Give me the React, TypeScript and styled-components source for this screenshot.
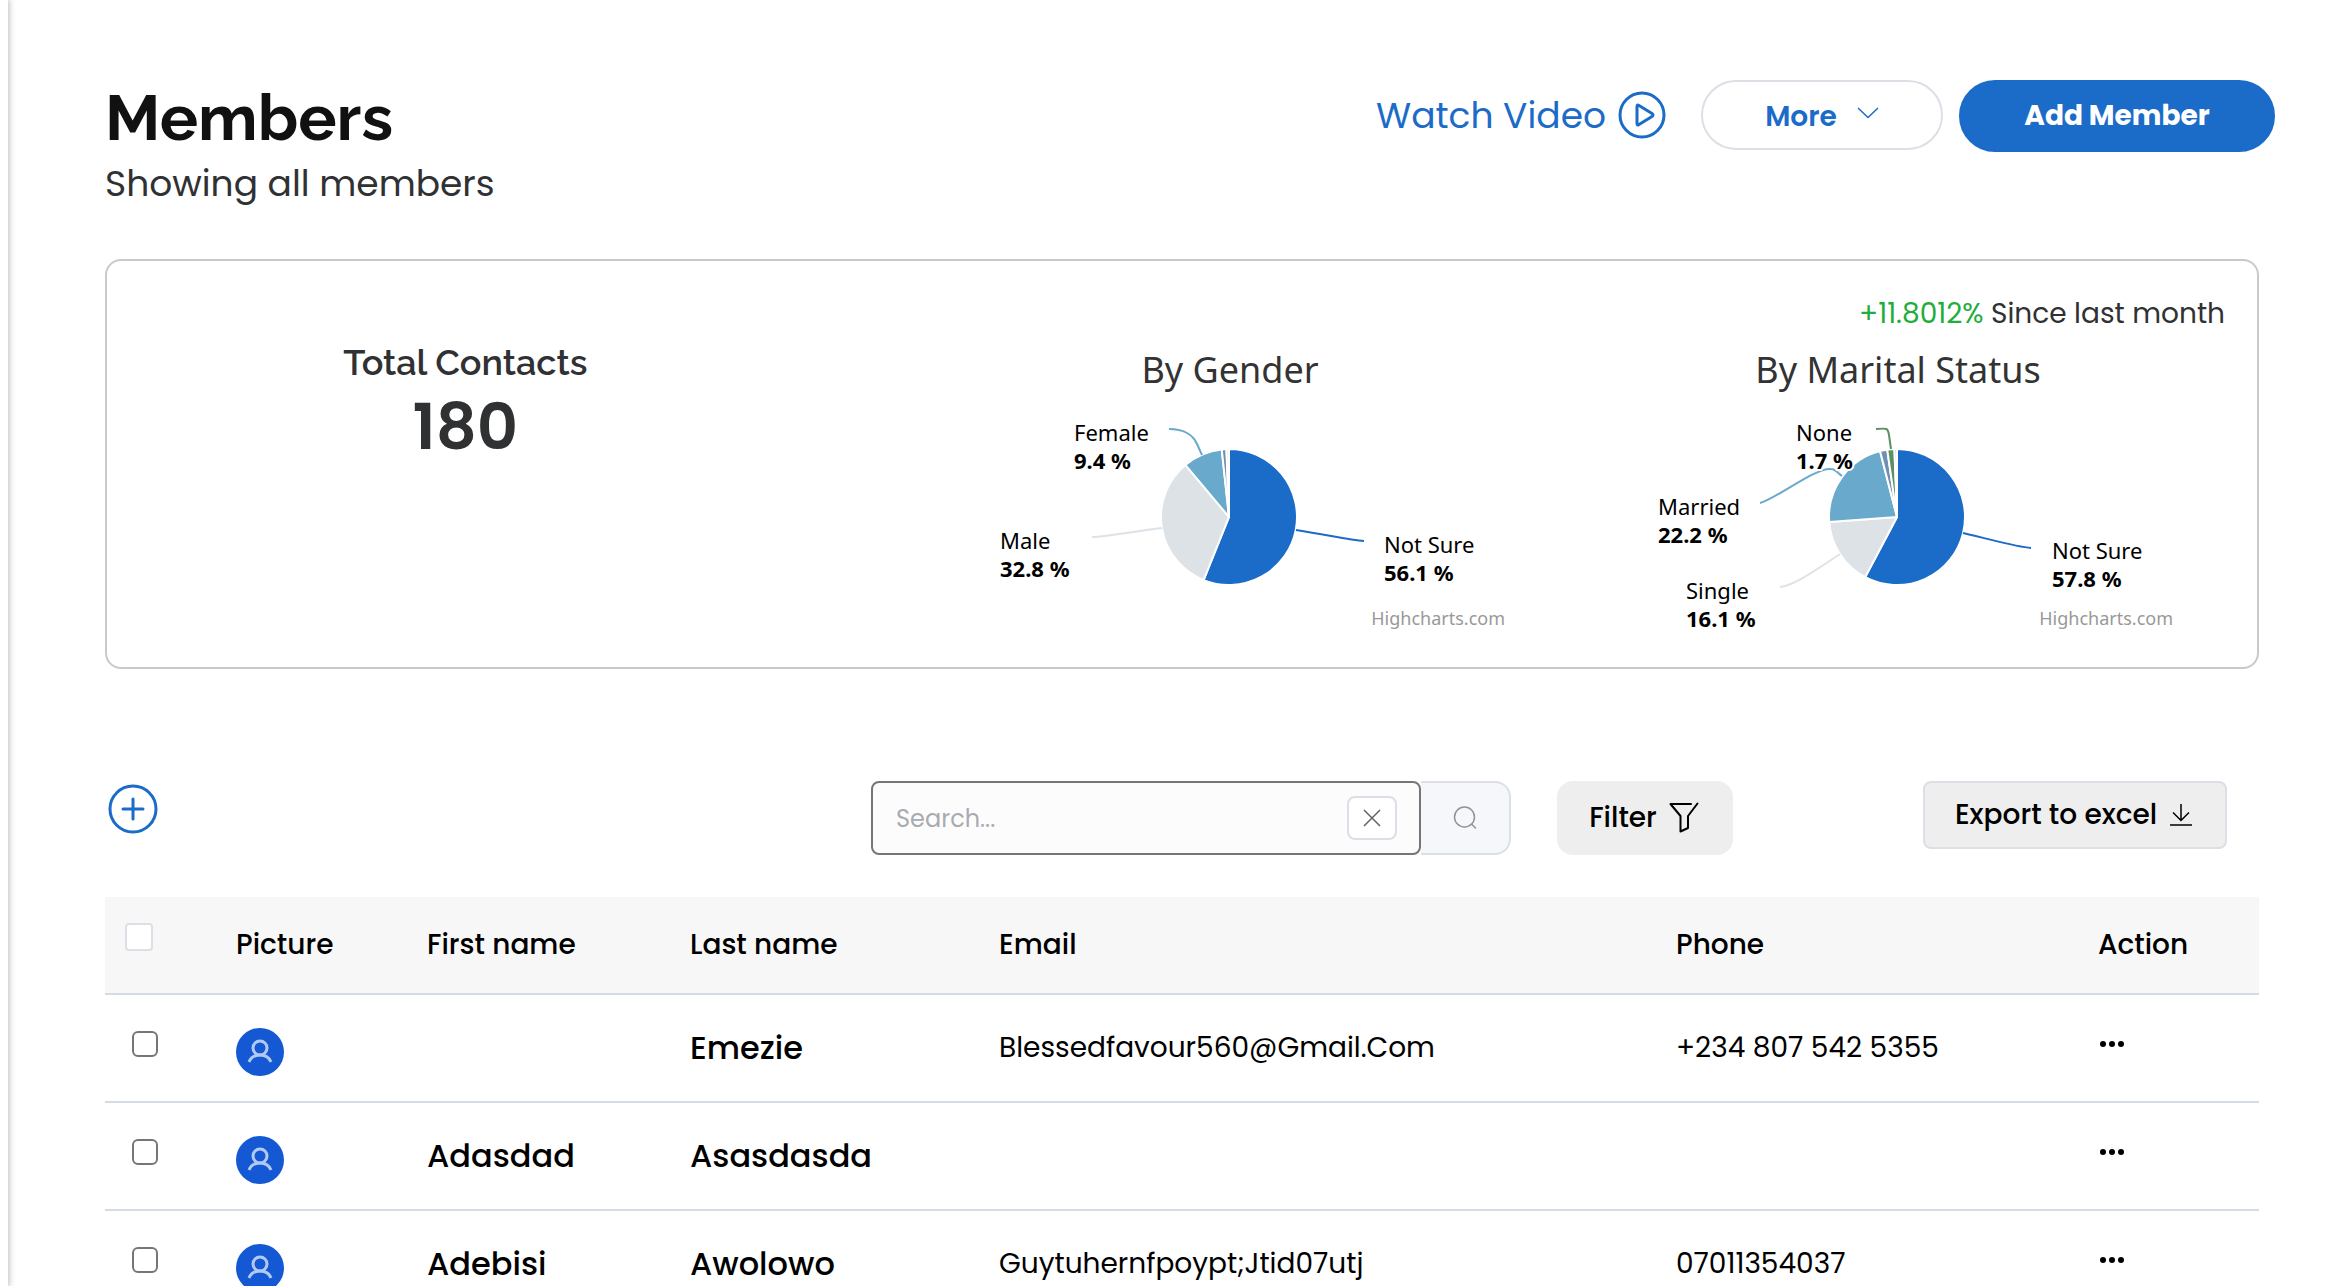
import React from 'react';
import styled, { createGlobalStyle } from 'styled-components';

const ui = '"Poppins", "Inter", "Open Sans", sans-serif';
const heading = '"Raleway", "Inter", sans-serif';
const chartFont = '"Lucida Grande", "Noto Sans", sans-serif';
const blue = '#1b6bc9';

const GlobalStyle = createGlobalStyle`
  *, *::before, *::after { box-sizing: border-box; }
  body { margin: 0; background: #fff; color: #000; font-family: ${ui}; }
  button, input { font-family: inherit; margin: 0; }
  h1, h2, p { margin: 0; }
`;

const Shell = styled.div`
  display: flex;
  height: 100vh;
  overflow: hidden;
`;

const SidebarEdge = styled.div`
  flex: none;
  width: 8px;
  background: #fff;
  box-shadow: 0 0 6px 1px rgba(0, 0, 0, 0.28);
`;

const Main = styled.main`
  flex: 1;
  min-width: 0;
  padding: 80px 67px 0 97px;
`;

const Header = styled.header`
  display: flex;
  justify-content: space-between;
  align-items: flex-start;
  margin-right: -16px;
  height: 179px;
`;

const Title = styled.h1`
  font: 700 64px/76px ${heading};
  color: #111;
`;

const Subtitle = styled.p`
  font-size: 36px;
  line-height: 56px;
  color: #303133;
`;

const HeaderActions = styled.div`
  display: flex;
  align-items: flex-start;
`;

const WatchLink = styled.a`
  display: flex;
  align-items: center;
  gap: 12px;
  height: 70px;
  margin-right: 35px;
  color: ${blue};
  font-size: 36px;
  text-decoration: none;
`;

const PillButton = styled.button<{ $primary?: boolean }>`
  display: flex;
  align-items: center;
  justify-content: center;
  gap: 20px;
  width: ${(p) => (p.$primary ? 316 : 242)}px;
  height: ${(p) => (p.$primary ? 72 : 70)}px;
  margin-left: ${(p) => (p.$primary ? 16 : 0)}px;
  padding: ${(p) => (p.$primary ? 0 : 4)}px 0 0;
  border: 2px solid ${(p) => (p.$primary ? blue : '#dcdfe6')};
  border-radius: 40px;
  background: ${(p) => (p.$primary ? blue : '#fff')};
  color: ${(p) => (p.$primary ? '#fff' : blue)};
  font-size: 28px;
  font-weight: ${(p) => (p.$primary ? 700 : 600)};

  svg { margin-bottom: 8px; }
`;

const StatsCard = styled.section`
  display: grid;
  grid-template-columns: 1fr 2fr;
  height: 410px;
  border: 2px solid #c8c9c9;
  border-radius: 16px;
`;

const Total = styled.div`
  padding-top: 78px;
  text-align: center;
  color: #303133;
`;

const TotalLabel = styled.h2`
  font: 600 36px/46px ${heading};
`;

const TotalValue = styled.p`
  font-size: 64px;
  font-weight: 600;
  line-height: 84px;
`;

const Breakdown = styled.div`
  padding: 31px 26px 0 71px;
`;

const Trend = styled.p`
  margin-bottom: 4px;
  padding-right: 6px;
  text-align: right;
  font-size: 28px;
  line-height: 44px;
  color: #303133;

  span { color: #1fae3c; }
`;

const Charts = styled.div`
  display: flex;
  justify-content: space-around;
`;

const ChartSvg = styled.svg`
  display: block;
  font-family: ${chartFont};
`;

const Toolbar = styled.div`
  display: flex;
  align-items: flex-start;
  height: 116px;
  margin-top: 112px;
  padding-right: 32px;
`;

const AddButton = styled.button`
  display: flex;
  margin: 2px auto 0 2px;
  padding: 0;
  border: 0;
  background: none;
  color: ${blue};
`;

const SearchGroup = styled.div`
  display: flex;
  width: 640px;
  height: 74px;
`;

const SearchBox = styled.label`
  display: flex;
  flex: 1;
  align-items: center;
  min-width: 0;
  padding: 0 22px 0 23px;
  border: 2px solid #767676;
  border-radius: 8px;
  background: #fcfcfc;
`;

const SearchInput = styled.input`
  flex: 1;
  min-width: 0;
  padding: 0;
  border: 0;
  outline: 0;
  background: transparent;
  font-size: 24px;

  &::placeholder { color: #a8abb2; opacity: 1; }
`;

const ClearButton = styled.button`
  display: flex;
  flex: none;
  align-items: center;
  justify-content: center;
  width: 50px;
  height: 44px;
  padding: 0;
  border: 2px solid #dcdfe6;
  border-radius: 8px;
  background: #fff;
  color: #606266;
`;

const SearchButton = styled.button`
  display: flex;
  flex: none;
  align-items: center;
  justify-content: center;
  width: 90px;
  padding: 0;
  border: 2px solid #dcdfe6;
  border-left: 0;
  border-radius: 0 16px 16px 0;
  background: #f5f7fa;
  color: #909399;
`;

const ToolButton = styled.button<{ $outlined?: boolean }>`
  display: flex;
  align-items: center;
  justify-content: center;
  gap: 12px;
  width: ${(p) => (p.$outlined ? 304 : 176)}px;
  height: ${(p) => (p.$outlined ? 68 : 74)}px;
  margin-left: ${(p) => (p.$outlined ? 190 : 46)}px;
  padding: 0 2px 0 0;
  border: ${(p) => (p.$outlined ? '2px solid #dcdfe6' : '0')};
  border-radius: ${(p) => (p.$outlined ? 8 : 16)}px;
  background: #eee;
  color: #000;
  font-size: 28px;
  font-weight: 500;
`;

const Table = styled.table`
  width: 100%;
  table-layout: fixed;
  border-collapse: separate;
  border-spacing: 0;
`;

const Column = styled.col<{ $width?: number }>`
  width: ${(p) => (p.$width ? `${p.$width}px` : 'auto')};
`;

const HeadCell = styled.th`
  height: 98px;
  padding: 0;
  border-bottom: 2px solid #d3dce4;
  background: #f7f7f7;
  text-align: left;
  font-size: 28px;
  font-weight: 500;
`;

const Cell = styled.td<{ $strong?: boolean }>`
  height: 108px;
  padding: 0;
  border-bottom: 2px solid #d3dce4;
  font-size: ${(p) => (p.$strong ? 32 : 28)}px;
  font-weight: ${(p) => (p.$strong ? 500 : 400)};
`;

const Checkbox = styled.input<{ $head?: boolean }>`
  display: block;
  appearance: none;
  width: ${(p) => (p.$head ? 28 : 26)}px;
  height: ${(p) => (p.$head ? 28 : 26)}px;
  margin: ${(p) => (p.$head ? '0 0 16px 20px' : '0 0 8px 27px')};
  border: 2px solid ${(p) => (p.$head ? '#dcdfe6' : '#767676')};
  border-radius: ${(p) => (p.$head ? 4 : 6)}px;
  background: #fff;
`;

const AvatarSvg = styled.svg`
  display: block;
  margin-top: 8px;
`;

const MenuButton = styled.button`
  display: block;
  margin: 0 0 8px;
  padding: 0;
  border: 0;
  background: none;
`;

type Slice = { value: number; color: string };
type Label = { name: string; value: string; x: number; y: number; color: string; path: string };

const CX = 296;
const CY = 177;
const R = 68;

function slicePath(from: number, to: number) {
  const point = (share: number) => {
    const a = share * 2 * Math.PI;
    return `${CX + R * Math.sin(a)} ${CY - R * Math.cos(a)}`;
  };
  return `M${CX} ${CY}L${point(from)}A${R} ${R} 0 ${to - from > 0.5 ? 1 : 0} 1 ${point(to)}Z`;
}

function PieChart({ title, slices, labels }: { title: string; slices: Slice[]; labels: Label[] }) {
  const total = slices.reduce((sum, s) => sum + s.value, 0);
  let start = 0;
  return (
    <ChartSvg width="592" height="300" viewBox="0 0 592 300" role="img" aria-label={title}>
      <text x="297" y="43" textAnchor="middle" fontSize="36" fill="#333">{title}</text>
      {slices.map((s, i) => {
        const from = start / total;
        start += s.value;
        return (
          <path key={i} d={slicePath(from, start / total)} fill={s.color} stroke="#fff" strokeWidth="2" strokeLinejoin="round" />
        );
      })}
      {labels.map((l) => (
        <path key={l.name} d={l.path} fill="none" stroke={l.color} strokeWidth="2" />
      ))}
      {labels.map((l) => (
        <text key={l.name} fontSize="22" fill="#000" stroke="#fff" strokeWidth="4" strokeLinejoin="round" paintOrder="stroke">
          <tspan x={l.x} y={l.y}>{l.name}</tspan>
          <tspan x={l.x} y={l.y + 28} fontWeight="700">{l.value}</tspan>
        </text>
      ))}
      <text x="572" y="285" textAnchor="end" fontSize="18" fill="#999">Highcharts.com</text>
    </ChartSvg>
  );
}

const NOT_SURE = '#1b6bc9';
const GREY = '#dde2e6';
const SKY = '#69a9cc';
const SLATE = '#6f8fb5';
const GREEN = '#5b9060';

const genderSlices: Slice[] = [
  { value: 56.1, color: NOT_SURE },
  { value: 32.8, color: GREY },
  { value: 9.4, color: SKY },
  { value: 1.1, color: SLATE },
  { value: 0.6, color: '#d5e3d6' },
];

const genderLabels: Label[] = [
  { name: 'Female', value: '9.4 %', x: 141, y: 101, color: SKY, path: 'M236 89C253 89 261 97 264 104L269 115' },
  { name: 'Male', value: '32.8 %', x: 67, y: 209, color: GREY, path: 'M159 197C173 197 190 193 229 188' },
  { name: 'Not Sure', value: '56.1 %', x: 451, y: 213, color: NOT_SURE, path: 'M431 201C417 200 400 196 363 190' },
];

const maritalSlices: Slice[] = [
  { value: 57.8, color: NOT_SURE },
  { value: 16.1, color: GREY },
  { value: 22.2, color: SKY },
  { value: 1.7, color: SLATE },
  { value: 1.7, color: GREEN },
  { value: 0.6, color: '#c5cbe0' },
];

const maritalLabels: Label[] = [
  { name: 'Married', value: '22.2 %', x: 57, y: 175, color: SKY, path: 'M159 163C175 159 215 127 230 129C234 129 236 132 241 136' },
  { name: 'Single', value: '16.1 %', x: 85, y: 259, color: GREY, path: 'M179 247C192 246 212 232 239 214' },
  { name: 'None', value: '1.7 %', x: 195, y: 101, color: GREEN, path: 'M275 89C286 88 287 88 288 95L290 109' },
  { name: 'Not Sure', value: '57.8 %', x: 451, y: 219, color: NOT_SURE, path: 'M430 208C416 207 400 202 362 193' },
];

function PlayCircle() {
  return (
    <svg width="48" height="48" viewBox="0 0 48 48" fill="none" stroke="currentColor" strokeWidth="3" strokeLinejoin="round" aria-hidden="true">
      <circle cx="24" cy="24" r="22" />
      <path d="M19 15.5Q19 13 21 14.5L34 22.500Q36 24 34 25.500L21 33.500Q19 35 19 32.500Z" />
    </svg>
  );
}

function PlusCircle() {
  return (
    <svg width="52" height="52" viewBox="0 0 52 52" fill="none" stroke="currentColor" strokeWidth="3" strokeLinecap="round" aria-hidden="true">
      <circle cx="26" cy="26" r="23" />
      <path d="M26 16v20M16 26h20" />
    </svg>
  );
}

function Avatar() {
  return (
    <AvatarSvg width="48" height="48" viewBox="0 0 48 48" fill="none" role="img" aria-label="Profile picture">
      <circle cx="24" cy="24" r="24" fill="#1459d3" />
      <g stroke="#b3c9f2" strokeWidth="3">
        <circle cx="24" cy="20" r="7" />
        <path d="M13 34C15 29 19 27 24 27S33 29 35 34" />
      </g>
    </AvatarSvg>
  );
}

type Member = { first: string; last: string; email: string; phone: string };

const members: Member[] = [
  { first: '', last: 'Emezie', email: 'Blessedfavour560@Gmail.Com', phone: '+234 807 542 5355' },
  { first: 'Adasdad', last: 'Asasdasda', email: '', phone: '' },
  { first: 'Adebisi', last: 'Awolowo', email: 'Guytuhernfpoypt;Jtid07utj', phone: '07011354037' },
];

const columnWidths = [131, 191, 263, 309, undefined, 422, 161];

export default function App() {
  return (
    <Shell>
      <GlobalStyle />
      <SidebarEdge />
      <Main>
        <Header>
          <div>
            <Title>Members</Title>
            <Subtitle>Showing all members</Subtitle>
          </div>
          <HeaderActions>
            <WatchLink href="#video">
              Watch Video
              <PlayCircle />
            </WatchLink>
            <PillButton type="button">
              More
              <svg width="22" height="12" viewBox="0 0 22 12" fill="none" stroke="currentColor" strokeWidth="1.500" aria-hidden="true">
                <path d="M1 1l10 9.500L21 1" />
              </svg>
            </PillButton>
            <PillButton type="button" $primary>Add Member</PillButton>
          </HeaderActions>
        </Header>

        <StatsCard>
          <Total>
            <TotalLabel>Total Contacts</TotalLabel>
            <TotalValue>180</TotalValue>
          </Total>
          <Breakdown>
            <Trend><span>+11.8012%</span> Since last month</Trend>
            <Charts>
              <PieChart title="By Gender" slices={genderSlices} labels={genderLabels} />
              <PieChart title="By Marital Status" slices={maritalSlices} labels={maritalLabels} />
            </Charts>
          </Breakdown>
        </StatsCard>

        <Toolbar>
          <AddButton type="button" aria-label="Add"><PlusCircle /></AddButton>
          <SearchGroup>
            <SearchBox>
              <SearchInput type="text" placeholder="Search..." aria-label="Search members" />
              <ClearButton type="button" aria-label="Clear search">
                <svg width="18" height="18" viewBox="0 0 18 18" fill="none" stroke="currentColor" strokeWidth="1.500" aria-hidden="true">
                  <path d="M1 1l16 16M17 1L1 17" />
                </svg>
              </ClearButton>
            </SearchBox>
            <SearchButton type="button" aria-label="Search">
              <svg width="24" height="24" viewBox="0 0 24 24" fill="none" stroke="currentColor" strokeWidth="1.500" aria-hidden="true">
                <circle cx="11.500" cy="11" r="10" />
                <path d="M18.500 18l4.500 4.500" />
              </svg>
            </SearchButton>
          </SearchGroup>
          <ToolButton type="button">
            Filter
            <svg width="30" height="32" viewBox="0 0 30 32" fill="none" stroke="currentColor" strokeWidth="2" strokeLinejoin="round" strokeLinecap="round" aria-hidden="true">
              <path d="M22 2H1.500L11.500 14V29.500L19 26V14L28.500 1.500" />
            </svg>
          </ToolButton>
          <ToolButton type="button" $outlined>
            Export to excel
            <svg width="24" height="24" viewBox="0 0 24 24" fill="none" stroke="currentColor" strokeWidth="1.500" aria-hidden="true">
              <path d="M12 1v16M4 9.500l8 8 8-8M1 22h22" />
            </svg>
          </ToolButton>
        </Toolbar>

        <Table>
          <colgroup>
            {columnWidths.map((w, i) => <Column key={i} $width={w} />)}
          </colgroup>
          <thead>
            <tr>
              <HeadCell><Checkbox type="checkbox" $head aria-label="Select all members" /></HeadCell>
              {['Picture', 'First name', 'Last name', 'Email', 'Phone', 'Action'].map((name) => (
                <HeadCell key={name} scope="col">{name}</HeadCell>
              ))}
            </tr>
          </thead>
          <tbody>
            {members.map((m) => (
              <tr key={m.last}>
                <Cell><Checkbox type="checkbox" aria-label={`Select ${m.last}`} /></Cell>
                <Cell><Avatar /></Cell>
                <Cell $strong>{m.first}</Cell>
                <Cell $strong>{m.last}</Cell>
                <Cell>{m.email}</Cell>
                <Cell>{m.phone}</Cell>
                <Cell>
                  <MenuButton type="button" aria-label={`Actions for ${m.last}`}>
                    <svg width="28" height="8" viewBox="0 0 28 8" aria-hidden="true">
                      <circle cx="5" cy="4" r="3" />
                      <circle cx="14" cy="4" r="3" />
                      <circle cx="23" cy="4" r="3" />
                    </svg>
                  </MenuButton>
                </Cell>
              </tr>
            ))}
          </tbody>
        </Table>
      </Main>
    </Shell>
  );
}
